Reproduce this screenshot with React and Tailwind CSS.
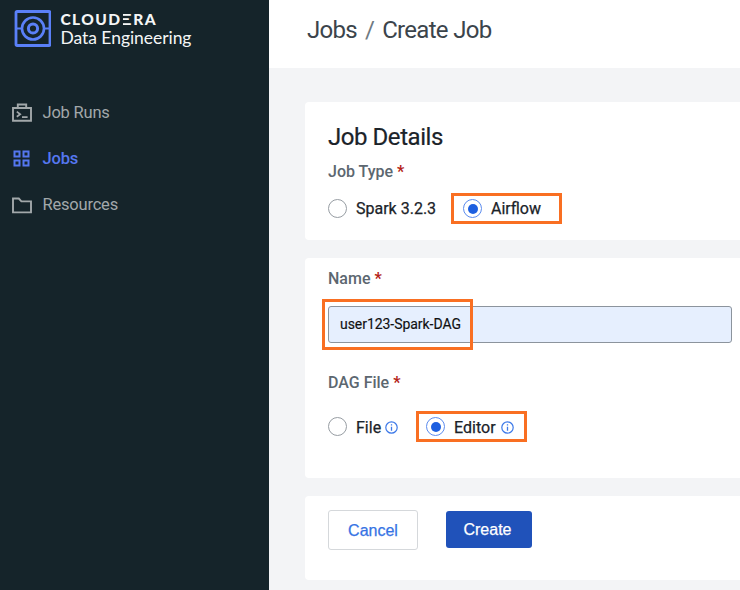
import React from "react";

function Logo() {
  return (
    <svg className="block h-[37px] w-[37px] shrink-0" viewBox="0 0 37 37" fill="none" stroke="#5a80f8">
      <rect x="2" y="1.500" width="34" height="34" rx="1" strokeWidth="2.800" />
      <circle cx="19" cy="18.500" r="11" strokeWidth="2.600" />
      <circle cx="19" cy="18.500" r="4.600" strokeWidth="3" />
      <path d="M2 18.500h6M30 18.500h6" strokeWidth="2" />
    </svg>
  );
}

function RunsIcon() {
  return (
    <svg className="block h-5 w-5" viewBox="0 0 20 20" fill="none" stroke="currentColor" strokeWidth="1.9">
      <path d="M1 5h18v12.800H1zM5.800 5V1.500h8.400V5" />
      <path d="M4.800 8.600l3.400 2.600-3.400 2.600M10 14.200h5.600" strokeWidth="1.700" />
    </svg>
  );
}

function GridIcon() {
  return (
    <svg className="block h-5 w-5" viewBox="0 0 20 20" fill="none" stroke="currentColor" strokeWidth="2">
      <rect x="2.500" y="2.500" width="5" height="5" />
      <rect x="11.500" y="2.500" width="5" height="5" />
      <rect x="2.500" y="11.500" width="5" height="5" />
      <rect x="11.500" y="11.500" width="5" height="5" />
    </svg>
  );
}

function FolderIcon() {
  return (
    <svg className="block h-5 w-5" viewBox="0 0 20 20" fill="none" stroke="currentColor" strokeWidth="1.9">
      <path d="M1 3.500h5.800l2.600 2.900H19v11H1z" />
    </svg>
  );
}

function NavItem({ icon, label, active }) {
  return (
    <div className={`flex h-[46px] items-center pl-3 ${active ? "font-medium text-[#5577ef]" : "text-[#a2a8aa]"}`}>
      {icon}
      <span className="-mt-px ml-[10.500px] text-[16.500px] leading-5 tracking-[-0.2px]">{label}</span>
    </div>
  );
}

function Radio({ checked }) {
  return (
    <span className={`flex h-[19px] w-[19px] shrink-0 items-center justify-center rounded-full border-[1.5px] bg-white ${checked ? "border-[#5c8cee]" : "border-[#979da3]"}`}>
      {checked && <span className="h-[10px] w-[10px] rounded-full bg-[#1d5fe0]" />}
    </span>
  );
}

function Info() {
  return (
    <svg className="mt-px block h-[13px] w-[13px] shrink-0" viewBox="0 0 13 13" fill="none" stroke="#3d79e8">
      <circle cx="6.500" cy="6.500" r="5.700" strokeWidth="1.200" />
      <path d="M6.500 5.700v4M6.500 3.200v1.300" strokeWidth="1.300" />
    </svg>
  );
}

function Label({ children }) {
  return (
    <div className="text-base leading-5 font-medium text-[#5c6770]">
      {children} <span className="font-bold text-[#b42318]">*</span>
    </div>
  );
}

export default function App() {
  return (
    <div className="flex h-[590px] w-[740px] overflow-hidden bg-[#f3f4f6] font-[Roboto,sans-serif]">
      <aside className="w-[269px] shrink-0 bg-[#15242a]">
        <div className="flex h-[90px] pt-[10px] pl-[14px]">
          <Logo />
          <div className="ml-[9.500px] font-[Lato,sans-serif] text-[#f4f6f6]">
            <div className="text-[15.500px] leading-[18px] font-black tracking-[1.400px]">
              CLOUD<span className="mr-[8px] -ml-[6.500px] inline-block origin-left scale-x-[1.9] [clip-path:inset(0_0_0_4.200px)]">E</span>RA
            </div>
            <div className="text-[17.500px] leading-[19px] tracking-[-0.05px]">Data Engineering</div>
          </div>
        </div>
        <nav>
          <NavItem icon={<RunsIcon />} label="Job Runs" />
          <NavItem icon={<GridIcon />} label="Jobs" active />
          <NavItem icon={<FolderIcon />} label="Resources" />
        </nav>
      </aside>
      <main className="min-w-0 flex-1">
        <header className="flex h-[68px] items-start bg-white pt-[15px] pl-[38px] text-[24px] leading-[30px] tracking-[-0.7px] text-[#3b444b]">
          <span>Jobs</span>
          <span className="mr-2 ml-2 text-[#6f7a82]">/</span>
          <span>Create Job</span>
        </header>
        <div className="flex flex-col gap-[18px] pt-[34px] pl-9">
          <section className="h-[138px] rounded-l bg-white pl-[23px]">
            <h2 className="pt-5 text-[24px] leading-[30px] tracking-[-0.45px] text-[#1b2329] [-webkit-text-stroke:0.2px]">Job Details</h2>
            <div className="mt-[10px]"><Label>Job Type</Label></div>
            <div className="mt-[11px] flex h-[31px] items-center text-base text-[#1b2329] [-webkit-text-stroke:0.25px]">
              <Radio />
              <span className="ml-[9px] w-[95px]">Spark 3.2.3</span>
              <div className="flex h-[31px] w-[111px] items-center border-[3px] border-[#f96f22] pl-[9px]">
                <Radio checked />
                <span className="ml-[9px]">Airflow</span>
              </div>
            </div>
          </section>
          <section className="h-[220px] rounded-l bg-white pl-[23px]">
            <div className="pt-[11px]"><Label>Name</Label></div>
            <div className="relative mt-[17px] flex h-[37px] w-[404px] items-center rounded-[3px] border border-[#8c949d] bg-[#e6effe] pb-px pl-[11px] text-sm tracking-[-0.05px] text-[#111] [-webkit-text-stroke:0.15px]">
              user123-Spark-DAG
              <div className="absolute -top-[8px] -left-[7px] h-[51px] w-[151px] border-[3px] border-[#f96f22]" />
            </div>
            <div className="mt-[30px]"><Label>DAG File</Label></div>
            <div className="mt-[18px] flex h-[31px] items-center text-base text-[#1b2329] [-webkit-text-stroke:0.25px]">
              <Radio />
              <span className="mt-0.5 ml-[9px]">File</span>
              <span className="ml-1 w-[31px]"><Info /></span>
              <div className="flex h-[31px] w-[111px] items-center border-[3px] border-[#f96f22] pl-[7px]">
                <Radio checked />
                <span className="mt-0.5 mr-[5px] ml-[9px]">Editor</span>
                <Info />
              </div>
            </div>
          </section>
          <section className="flex h-[84px] rounded-l bg-white pt-[14px] pl-[23px] font-['Liberation_Sans',sans-serif] text-base [-webkit-text-stroke:0.25px]">
            <button className="h-10 w-[90px] rounded-[3px] border border-[#d5d8db] pt-px text-[#3673e4]">Cancel</button>
            <button className="mt-px ml-[27.500px] h-[37px] w-[86px] rounded-[3px] bg-[#2052ba] pt-px pr-0.5 text-white">Create</button>
          </section>
        </div>
      </main>
    </div>
  );
}
